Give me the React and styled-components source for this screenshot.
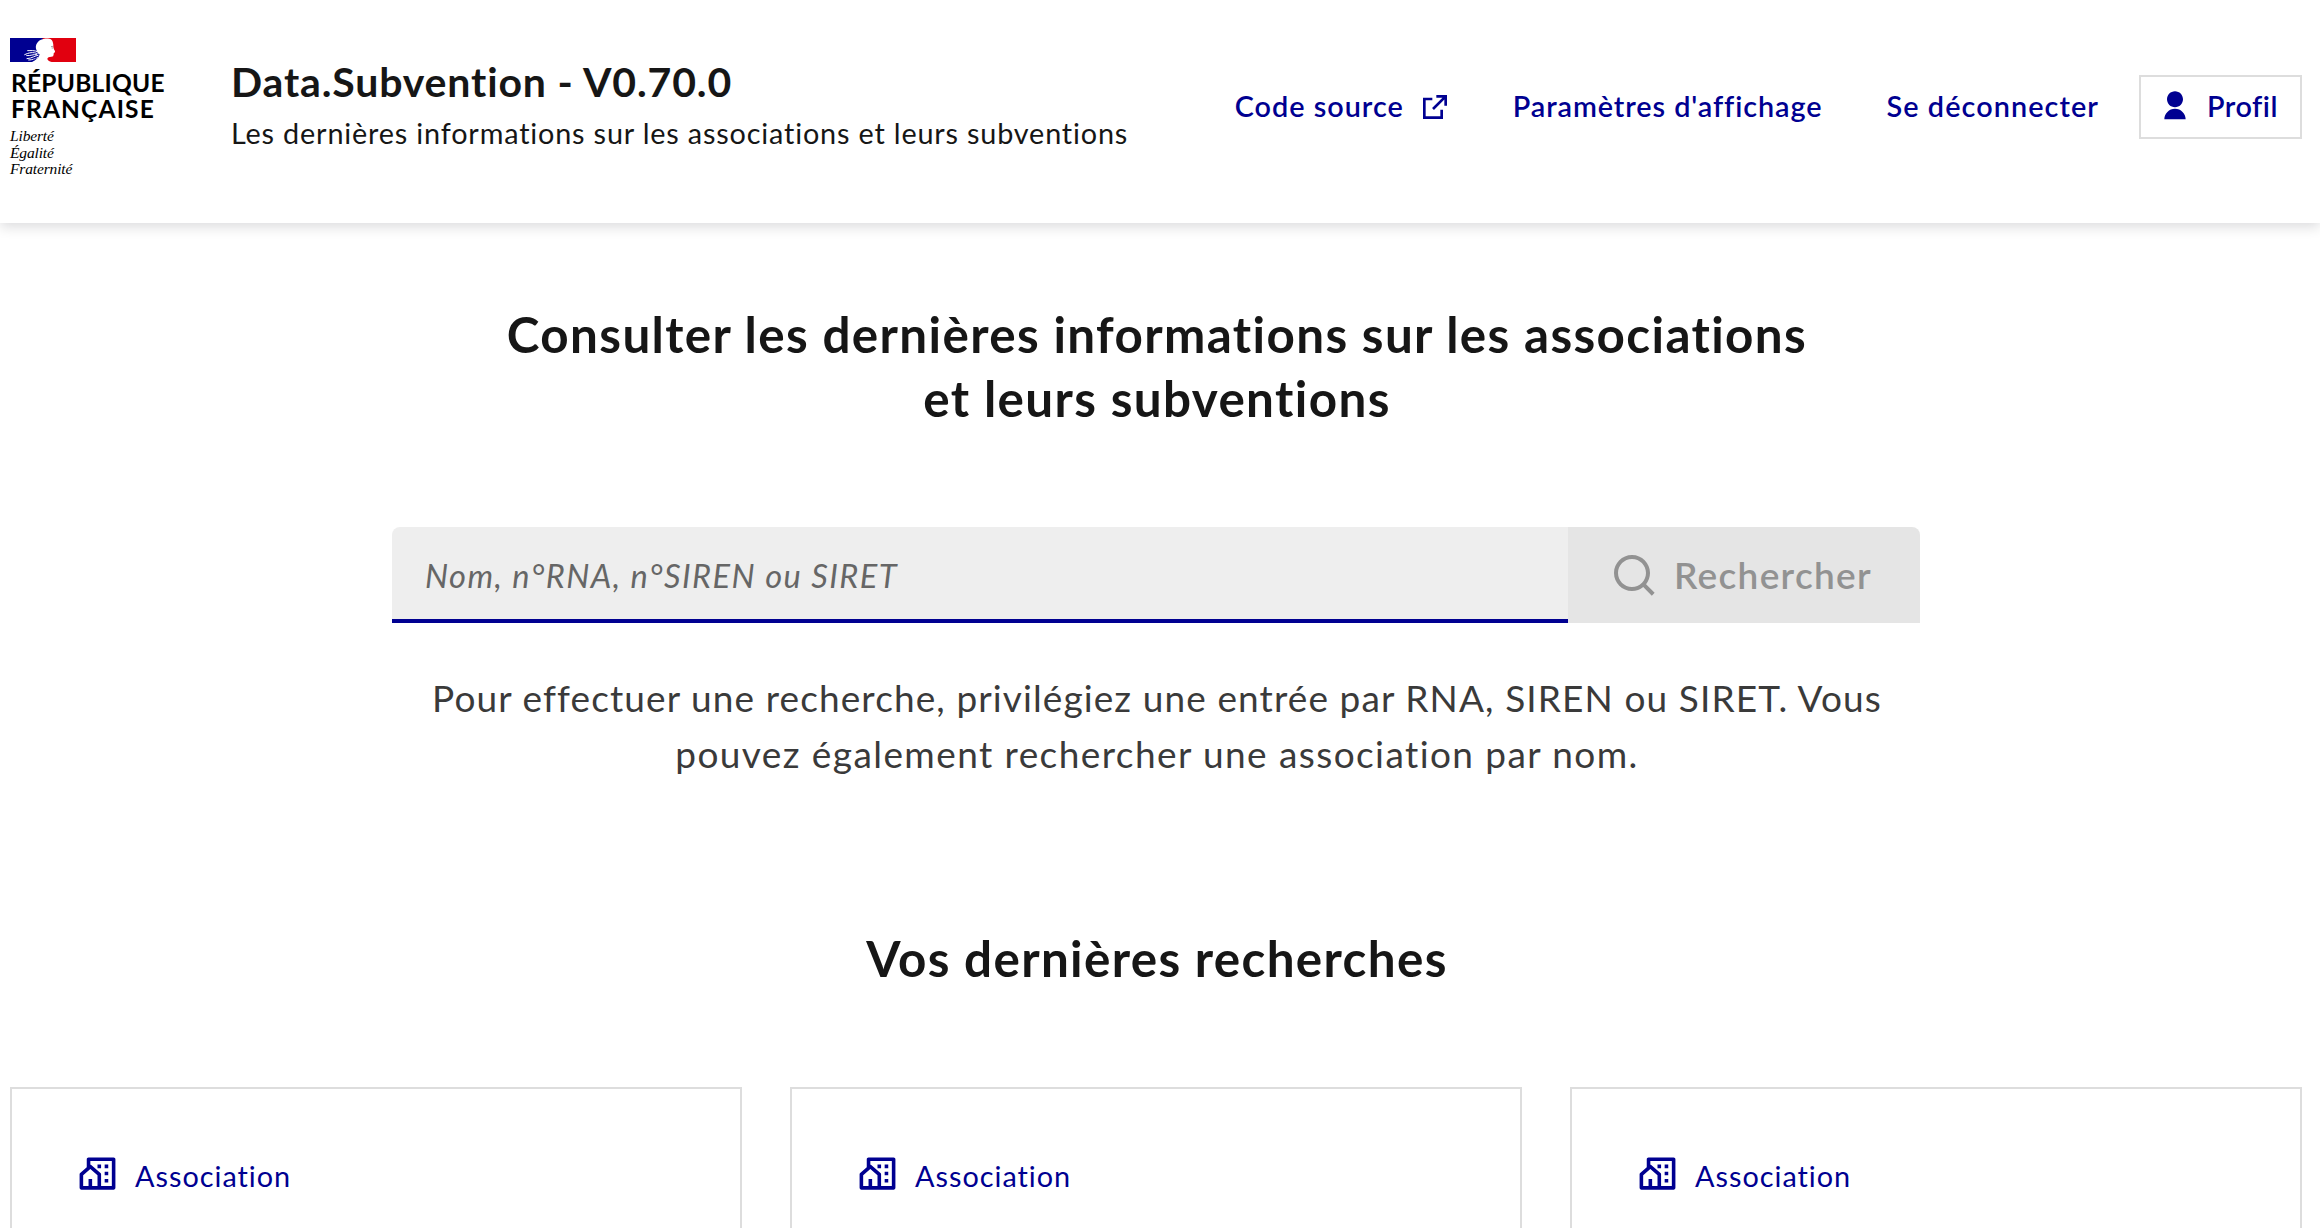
import React from "react";
import styled, { createGlobalStyle } from "styled-components";
import { RiCommunityLine, RiSearchLine, RiUserFill } from "react-icons/ri";

const blue = "#000091";

const GlobalStyle = createGlobalStyle`
  *, *::before, *::after { box-sizing: border-box; }
  html, body { margin: 0; height: 100%; overflow: hidden; }
  body {
    background: #fff;
    color: #161616;
    font-family: Lato, "Open Sans", "Liberation Sans", sans-serif;
    font-variant-ligatures: none;
  }
`;

const Page = styled.div`
  height: 1228px;
  overflow: hidden;
`;

const Header = styled.header`
  display: flex;
  align-items: flex-start;
  height: 223px;
  padding: 0 18px 0 10px;
  background: #fff;
  box-shadow: 0 4px 12px rgba(0, 0, 18, 0.14);
`;

const Brand = styled.div`
  width: 221px;
  padding-top: 38px;
  color: #000;
`;

const Flag = styled.svg`
  display: block;
  width: 66px;
  height: 24px;
`;

const StateName = styled.div`
  margin: 8px 0 0 1px;
  font-size: 24.5px;
  font-weight: 700;
  line-height: 26px;
`;

const StateLine = styled.div`
  letter-spacing: ${(p) => p.$spacing}px;
  white-space: nowrap;
`;

const Motto = styled.div`
  margin-top: 6px;
  font-family: "Liberation Serif", serif;
  font-style: italic;
  font-size: 15.5px;
  line-height: 16.5px;
  letter-spacing: -0.15px;
`;

const Service = styled.div`
  flex: 1;
  padding-top: 54px;
  white-space: nowrap;
`;

const ServiceTitle = styled.p`
  margin: 0;
  font-size: 41px;
  font-weight: 700;
  line-height: 56px;
  letter-spacing: 0.85px;
`;

const ServiceTagline = styled.p`
  margin: -1px 0 0;
  font-size: 28.8px;
  line-height: 48px;
  letter-spacing: 0.83px;
`;

const Nav = styled.nav`
  display: flex;
  gap: 16px;
  padding-top: 75px;
`;

const NavLink = styled.a`
  display: flex;
  align-items: center;
  height: 62px;
  padding: 0 24px;
  color: ${blue};
  font-size: 28.8px;
  font-weight: 600;
  letter-spacing: ${(p) => p.$spacing}px;
  white-space: nowrap;
`;

const ProfileLink = styled(NavLink)`
  width: 163px;
  height: 64px;
  padding: 0 0 2px 18px;
  gap: 16px;
  border: 2px solid #ddd;
`;

const ExternalIcon = styled.svg`
  width: 32px;
  height: 32px;
  margin: 2px -2px 0 15px;
  fill: currentColor;
`;

const Main = styled.main`
  display: flex;
  flex-direction: column;
  align-items: center;
  padding: 79px 18px 0 10px;
`;

const Heading = styled.h1`
  margin: 0;
  font-size: 49.4px;
  font-weight: 700;
  line-height: 64px;
  text-align: center;
`;

const Line = styled.span`
  display: block;
  padding-left: 2px;
  letter-spacing: ${(p) => p.$spacing}px;
  white-space: nowrap;
`;

const SearchBar = styled.form`
  display: flex;
  width: 1528px;
  height: 96px;
  margin-top: 97px;
`;

const SearchInput = styled.input`
  flex: 1;
  min-width: 0;
  padding: 0 33px;
  border: 0;
  border-radius: 8px 0 0 0;
  outline: 0;
  background: #eee;
  box-shadow: inset 0 -4px 0 ${blue};
  font: 400 32.6px Lato, sans-serif;

  &::placeholder {
    color: #666;
    opacity: 1;
    font-style: italic;
    letter-spacing: 1.43px;
  }
`;

const SearchButton = styled.button`
  display: flex;
  align-items: center;
  gap: 16px;
  width: 352px;
  padding: 0 0 0 42px;
  border: 0;
  border-radius: 0 8px 0 0;
  background: #e5e5e5;
  color: #929292;
  font: 600 37px Lato, sans-serif;
  letter-spacing: 1.3px;
`;

const SearchLabel = styled.span`
  padding-bottom: 2px;
`;

const Hint = styled.p`
  margin: 47px 0 0;
  color: #3a3a3a;
  font-size: 37px;
  line-height: 56px;
  text-align: center;
`;

const SectionTitle = styled.h2`
  margin: 144px 0 0;
  padding-left: 2px;
  font-size: 49.4px;
  font-weight: 700;
  line-height: 64px;
  letter-spacing: 1.33px;
`;

const Cards = styled.div`
  display: grid;
  grid-template-columns: repeat(3, 1fr);
  gap: 48px;
  width: 100%;
  margin-top: 97px;
`;

const Card = styled.article`
  height: 400px;
  padding: 63px 64px 0;
  border: 2px solid #ddd;
`;

const CardKind = styled.p`
  display: flex;
  align-items: flex-start;
  gap: 16px;
  margin: 0;
  color: ${blue};
  font-size: 28.8px;
  line-height: 48px;
  letter-spacing: 1px;
`;

const searches = ["Association", "Association", "Association"];

function MarianneFlag() {
  return (
    <Flag viewBox="0 0 198 72">
      <rect width="104" height="72" fill={blue} />
      <rect x="98" width="100" height="72" fill="#e1000f" />
      <path
        fill="#fff"
        d="M66 72 C78 66 86 60 88 52 L80 38 C76 30 77 22 81 16 C85 9 91 5 98 4 C102 1 110 1 118 2 C125 3 128 8 129 15 C131 21 129 25 131 31 C132 36 136 39 135 42 C134 44 131 44 131 46 C132 49 131 50 130 51 C131 54 129 56 124 56 C117 56 113 58 112 62 C112 67 118 69 125 72 Z"
      />
      <path
        fill="none"
        stroke="#fff"
        strokeWidth="3"
        strokeLinecap="round"
        d="M84 42 C74 36 62 38 53 38 M82 47 C70 41 56 44 44 50 M80 50 C70 48 62 54 50 53 M86 52 C74 52 68 61 51 62 M84 58 C76 62 68 66 56 66"
      />
      <path
        fill="none"
        stroke={blue}
        strokeWidth="2"
        strokeLinecap="round"
        d="M88 49 C84 58 74 64 66 68"
      />
      <path fill="none" stroke="#777" strokeWidth="2" d="M123 26 L129 25 M125 30 L129 30" />
    </Flag>
  );
}

export default function App() {
  return (
    <Page>
      <GlobalStyle />
      <Header>
        <Brand>
          <MarianneFlag />
          <StateName>
            <StateLine $spacing={0.25}>RÉPUBLIQUE</StateLine>
            <StateLine $spacing={1.15}>FRANÇAISE</StateLine>
          </StateName>
          <Motto>
            <div>Liberté</div>
            <div>Égalité</div>
            <div>Fraternité</div>
          </Motto>
        </Brand>
        <Service>
          <ServiceTitle>Data.Subvention - V0.70.0</ServiceTitle>
          <ServiceTagline>
            Les dernières informations sur les associations et leurs subventions
          </ServiceTagline>
        </Service>
        <Nav>
          <NavLink $spacing={1}>
            Code source
            <ExternalIcon viewBox="0 0 24 24">
              <path d="M10 5v2H5v12h11v-5h2v7H3V5h7zm11-2v8h-2V6.413l-7.793 7.794-1.414-1.414L17.585 5H13V3h8z" />
            </ExternalIcon>
          </NavLink>
          <NavLink $spacing={0.92}>Paramètres d'affichage</NavLink>
          <NavLink $spacing={1.08}>Se déconnecter</NavLink>
          <ProfileLink $spacing={0.5}>
            <RiUserFill size={32} />
            Profil
          </ProfileLink>
        </Nav>
      </Header>
      <Main>
        <Heading>
          <Line $spacing={1.36}>Consulter les dernières informations sur les associations</Line>
          <Line $spacing={1.37}>et leurs subventions</Line>
        </Heading>
        <SearchBar>
          <SearchInput placeholder="Nom, n°RNA, n°SIREN ou SIRET" />
          <SearchButton type="button">
            <RiSearchLine size={48} />
            <SearchLabel>Rechercher</SearchLabel>
          </SearchButton>
        </SearchBar>
        <Hint>
          <Line $spacing={1.1}>
            Pour effectuer une recherche, privilégiez une entrée par RNA, SIREN ou SIRET. Vous
          </Line>
          <Line $spacing={1.42}>pouvez également rechercher une association par nom.</Line>
        </Hint>
        <SectionTitle>Vos dernières recherches</SectionTitle>
        <Cards>
          {searches.map((kind, i) => (
            <Card key={i}>
              <CardKind>
                <RiCommunityLine size={43} />
                {kind}
              </CardKind>
            </Card>
          ))}
        </Cards>
      </Main>
    </Page>
  );
}
